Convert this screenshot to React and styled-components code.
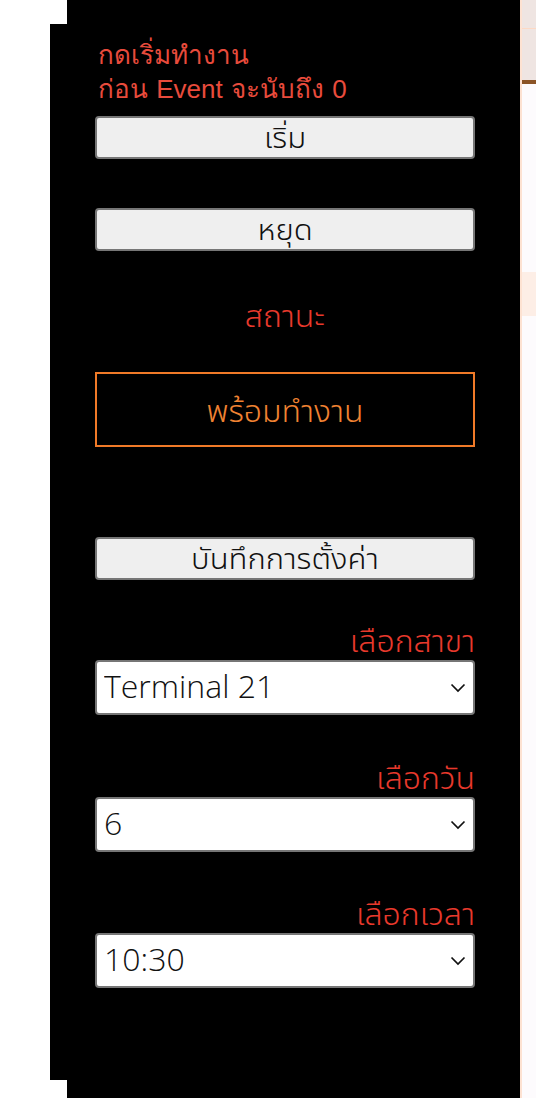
import React from "react";
import styled, { createGlobalStyle } from "styled-components";

const GlobalStyle = createGlobalStyle`
  html, body {
    margin: 0;
    padding: 0;
    background: #ffffff;
  }
  * { box-sizing: border-box; }
`;

const thaiStack = `"Open Sans", "Noto Sans Thai UI", "Noto Sans Thai", "Noto Sans", sans-serif`;

const Screen = styled.div`
  display: flex;
  width: 536px;
  height: 1098px;
  overflow: hidden;
`;

const Backdrop = styled.div`
  width: 520px;
  height: 100%;
  padding: 24px 0 18px 50px;
  background: linear-gradient(to right, #ffffff 67px, #000000 67px);
`;

const Panel = styled.div`
  height: 100%;
  background: #000000;
  padding: 0 45px;
  display: flex;
  flex-direction: column;
`;

const Notice = styled.div`
  padding: 14px 0 0 3px;
  font-family: "Liberation Sans", Arial, sans-serif;
  font-size: 26px;
  line-height: 34px;
  word-spacing: 1px;
  color: #e84b3c;
`;

const ActionButton = styled.button`
  margin-top: ${(p) => p.$gap}px;
  height: 43px;
  width: 100%;
  background: #efefef;
  border: 2px solid #767676;
  border-radius: 4px;
  font-family: ${thaiStack};
  font-weight: 300;
  font-size: 31px;
  line-height: 1;
  color: #111111;
  padding: 0 0 2px;
  cursor: pointer;
`;

const StatusLabel = styled.div`
  margin-top: 44px;
  height: 40px;
  text-align: center;
  font-family: ${thaiStack};
  font-weight: 300;
  font-size: 32px;
  line-height: 40px;
  color: #e8392c;
`;

const StatusBox = styled.div`
  margin-top: 37px;
  height: 75px;
  border: 2px solid #f07a28;
  display: flex;
  align-items: center;
  justify-content: center;
  font-family: ${thaiStack};
  font-weight: 300;
  font-size: 32px;
  color: #f08232;
`;

const Field = styled.label`
  display: flex;
  flex-direction: column;
  margin-top: ${(p) => p.$gap}px;
`;

const FieldLabel = styled.span`
  height: 40px;
  text-align: right;
  font-family: ${thaiStack};
  font-weight: 300;
  font-size: 32px;
  line-height: 40px;
  color: #e8392c;
`;

const SelectWrap = styled.div`
  position: relative;
  height: 55px;
`;

const Select = styled.select`
  appearance: none;
  -webkit-appearance: none;
  width: 100%;
  height: 100%;
  background: #ffffff;
  border: 2px solid #767676;
  border-radius: 4px;
  padding: 0 40px 5px 7px;
  font-family: "Open Sans", "Noto Sans", sans-serif;
  font-weight: 300;
  font-size: 32px;
  color: #111111;
  outline: none;
`;

const Chevron = styled.svg`
  position: absolute;
  right: 9px;
  top: 50%;
  transform: translateY(-50%);
  pointer-events: none;
`;

const Aside = styled.div`
  width: 16px;
  height: 100%;
  border-left: 2px solid #fde2d2;
  display: flex;
  flex-direction: column;
  background: #fdfbfd;
`;

const AsideTop = styled.div`
  height: 84px;
  background: #efe5e2;
  border-bottom: 4px solid #8b5426;
  &::before {
    content: "";
    display: block;
    height: 28px;
    border-bottom: 1px solid #fdd9c4;
  }
`;

const AsideBand = styled.div`
  margin-top: ${(p) => p.$gap}px;
  height: ${(p) => p.$h}px;
  background: #fdeee6;
`;

function SelectField({ label, value, options, gap }) {
  return (
    <Field $gap={gap}>
      <FieldLabel>{label}</FieldLabel>
      <SelectWrap>
        <Select defaultValue={value}>
          {options.map((o) => (
            <option key={o} value={o}>
              {o}
            </option>
          ))}
        </Select>
        <Chevron width="16" height="10" viewBox="0 0 16 10" fill="none">
          <path d="M1.5 1.5 L8 8 L14.5 1.5" stroke="#111" strokeWidth="1.7" />
        </Chevron>
      </SelectWrap>
    </Field>
  );
}

export default function App() {
  return (
    <>
      <GlobalStyle />
      <Screen>
        <Backdrop>
          <Panel>
            <Notice>
              กดเริ่มทำงาน
              <br />
              ก่อน Event จะนับถึง 0
            </Notice>
            <ActionButton $gap={10}>เริ่ม</ActionButton>
            <ActionButton $gap={49}>หยุด</ActionButton>
            <StatusLabel>สถานะ</StatusLabel>
            <StatusBox>พร้อมทำงาน</StatusBox>
            <ActionButton $gap={90}>บันทึกการตั้งค่า</ActionButton>
            <SelectField
              gap={40}
              label="เลือกสาขา"
              value="Terminal 21"
              options={["Terminal 21", "Siam Paragon", "CentralWorld"]}
            />
            <SelectField
              gap={42}
              label="เลือกวัน"
              value="6"
              options={["1", "2", "3", "4", "5", "6", "7"]}
            />
            <SelectField
              gap={41}
              label="เลือกเวลา"
              value="10:30"
              options={["10:00", "10:30", "11:00", "11:30"]}
            />
          </Panel>
        </Backdrop>
        <Aside>
          <AsideTop />
          <AsideBand $gap={188} $h={44} />
        </Aside>
      </Screen>
    </>
  );
}
